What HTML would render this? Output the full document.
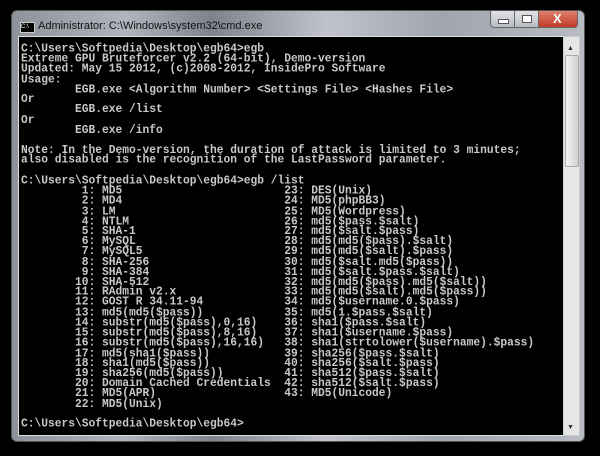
<!DOCTYPE html>
<html><head><style>
body{margin:0;width:600px;height:456px;background:#000;overflow:hidden;position:relative;font-family:"Liberation Sans",sans-serif}
.win{position:absolute;left:11px;top:10px;width:572px;height:430px;border-radius:6px;background:linear-gradient(90deg,#8e929a,#b0b4bc 20%,#7e828c 35%,#c0c4ca 55%,#a0a5ae 75%,#b8bcc2);border:1px solid #555}
.title{position:absolute;left:26px;top:9px;font-size:11px;color:#111}
.ico{position:absolute;left:8px;top:11px;width:13px;height:9px;background:#000;border:1px solid #ccc;font-size:6px;color:#fff;line-height:9px}
.btn{position:absolute;top:0;height:16px;border:1px solid #666;border-top:none;background:linear-gradient(#e0e2e6,#b8bcc2)}
.term{position:absolute;left:6px;top:25px;width:544px;height:398px;background:#000;border:1px solid #ddd;overflow:hidden}
.sb{position:absolute;left:551px;top:25px;width:15px;height:398px;background:#e6e6e6;border:1px solid #ccc}
pre{margin:0;position:absolute;left:2px;top:8px;font-family:"Liberation Mono",monospace;font-size:11.25px;line-height:9.22px;color:#c8c8c8;font-weight:bold;transform:scaleY(1.1);transform-origin:0 0}
</style></head><body>
<div class="win">
<div class="ico">C:\</div>
<div class="title">Administrator: C:\Windows\system32\cmd.exe</div>
<div class="btn" style="left:478px;width:23px;border-radius:0 0 0 4px"><div style="position:absolute;left:7px;top:8px;width:9px;height:3px;background:#fff;border:1px solid #555"></div></div>
<div class="btn" style="left:502px;width:23px"><div style="position:absolute;left:7px;top:4px;width:8px;height:6px;border:1px solid #555;background:#fff"></div></div>
<div class="btn" style="left:526px;width:38px;border-radius:0 0 4px 0;background:linear-gradient(#e08070,#c03a28)"><div style="position:absolute;left:14px;top:0;color:#fff;font-weight:bold;font-size:13px">X</div></div>
<div class="term"><pre>C:\Users\Softpedia\Desktop\egb64&gt;egb
Extreme GPU Bruteforcer v2.2 (64-bit), Demo-version
Updated: May 15 2012, (c)2008-2012, InsidePro Software
Usage:
        EGB.exe &lt;Algorithm Number&gt; &lt;Settings File&gt; &lt;Hashes File&gt;
Or
        EGB.exe /list
Or
        EGB.exe /info

Note: In the Demo-version, the duration of attack is limited to 3 minutes;
also disabled is the recognition of the LastPassword parameter.

C:\Users\Softpedia\Desktop\egb64&gt;egb /list
         1: MD5                        23: DES(Unix)
         2: MD4                        24: MD5(phpBB3)
         3: LM                         25: MD5(Wordpress)
         4: NTLM                       26: md5($pass.$salt)
         5: SHA-1                      27: md5($salt.$pass)
         6: MySQL                      28: md5(md5($pass).$salt)
         7: MySQL5                     29: md5(md5($salt).$pass)
         8: SHA-256                    30: md5($salt.md5($pass))
         9: SHA-384                    31: md5($salt.$pass.$salt)
        10: SHA-512                    32: md5(md5($pass).md5($salt))
        11: RAdmin v2.x                33: md5(md5($salt).md5($pass))
        12: GOST R 34.11-94            34: md5($username.0.$pass)
        13: md5(md5($pass))            35: md5(1.$pass.$salt)
        14: substr(md5($pass),0,16)    36: sha1($pass.$salt)
        15: substr(md5($pass),8,16)    37: sha1($username.$pass)
        16: substr(md5($pass),16,16)   38: sha1(strtolower($username).$pass)
        17: md5(sha1($pass))           39: sha256($pass.$salt)
        18: sha1(md5($pass))           40: sha256($salt.$pass)
        19: sha256(md5($pass))         41: sha512($pass.$salt)
        20: Domain Cached Credentials  42: sha512($salt.$pass)
        21: MD5(APR)                   43: MD5(Unicode)
        22: MD5(Unix)

C:\Users\Softpedia\Desktop\egb64&gt;</pre></div>
<div class="sb"><div style="position:absolute;left:3px;top:8px;font-size:7px;color:#333">▲</div><div style="position:absolute;left:1px;top:18px;width:12px;height:110px;background:linear-gradient(90deg,#f4f4f4,#d0d0d0);border:1px solid #aaa;border-radius:2px"></div><div style="position:absolute;left:3px;bottom:4px;font-size:7px;color:#333">▼</div></div>
</div>
</body></html>
